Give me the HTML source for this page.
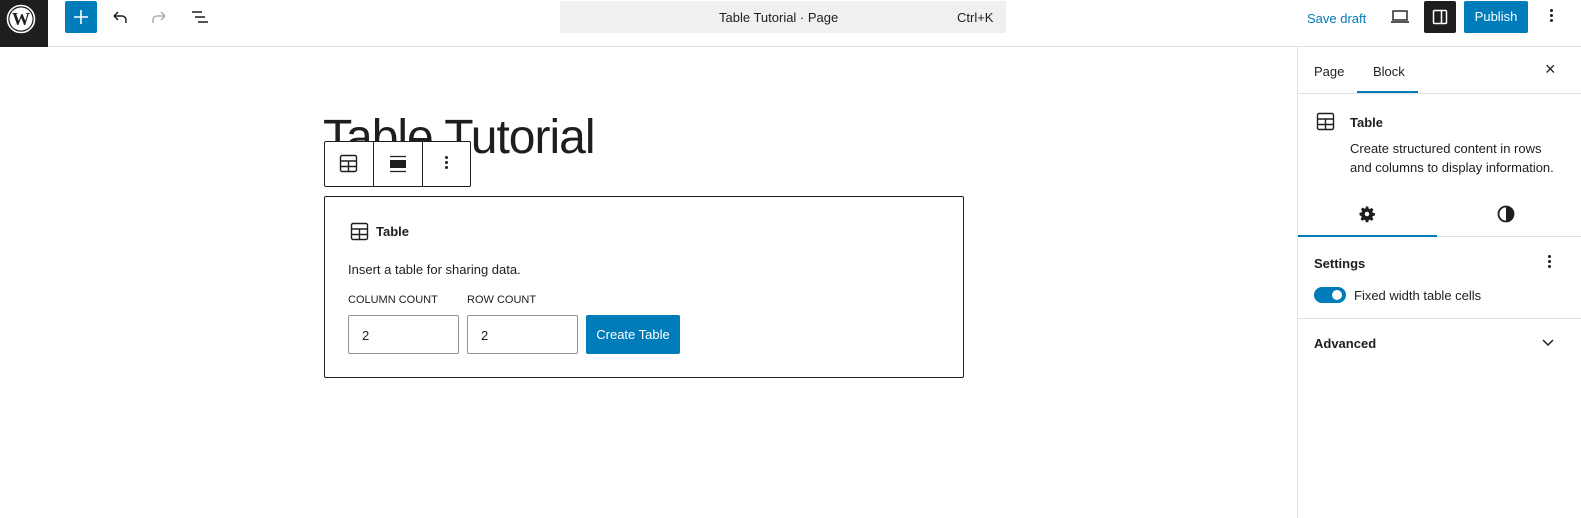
<!DOCTYPE html>
<html><head><style>
*{box-sizing:border-box;margin:0;padding:0}
body{width:1581px;height:518px;overflow:hidden;background:#fff;font-family:"Liberation Sans",sans-serif;color:#1e1e1e;position:relative;font-size:13px}
.a{position:absolute}
</style></head><body>
<div class="a" style="left:0;top:0;width:1581px;height:47px;border-bottom:1px solid #e0e0e0"></div>
<div class="a" style="left:0;top:0;width:48px;height:47px;background:#1e1e1e"></div>
<svg class="a" style="left:6px;top:4px" width="30" height="30" viewBox="0 0 30 30"><circle cx="15" cy="15" r="13.5" fill="none" stroke="#fff" stroke-width="1.6"/><circle cx="15" cy="15" r="11.5" fill="#fff"/><text x="15" y="21" text-anchor="middle" font-family="Liberation Serif" font-weight="bold" font-size="18" fill="#1e1e1e">W</text></svg>
<div class="a" style="left:65px;top:1px;width:32px;height:32px;background:#007cba;border-radius:2px"></div>
<svg class="a" style="left:65px;top:1px" width="32" height="32"><path d="M16 9v14M9 16h14" stroke="#fff" stroke-width="1.6"/></svg>
<svg class="a" style="left:110px;top:7px" width="20" height="20"><path d="M4 9h8a4 4 0 0 1 4 4v3M4 9l4-4M4 9l4 4" fill="none" stroke="#1e1e1e" stroke-width="1.5"/></svg>
<svg class="a" style="left:149px;top:7px" width="20" height="20"><path d="M16 9H8a4 4 0 0 0-4 4v3M16 9l-4-4M16 9l-4 4" fill="none" stroke="#aaa" stroke-width="1.5"/></svg>
<svg class="a" style="left:190px;top:7px" width="20" height="20"><path d="M2 5h10M5 10h10M8 15h10" stroke="#1e1e1e" stroke-width="1.5"/></svg>
<div class="a" style="left:560px;top:1px;width:446px;height:32px;background:#f0f0f0;border-radius:2px"></div>
<div class="a" style="left:719px;top:10px;font-size:13px">Table Tutorial · Page</div>
<div class="a" style="left:957px;top:10px;font-size:13px">Ctrl+K</div>
<div class="a" style="left:1307px;top:11px;color:#007cba;font-size:13px">Save draft</div>
<svg class="a" style="left:1390px;top:7px" width="20" height="20"><rect x="3" y="4" width="14" height="9" fill="none" stroke="#1e1e1e" stroke-width="1.4"/><path d="M1 15h18" stroke="#1e1e1e" stroke-width="1.5"/></svg>
<div class="a" style="left:1424px;top:1px;width:32px;height:32px;background:#1e1e1e;border-radius:2px"></div>
<svg class="a" style="left:1430px;top:7px" width="20" height="20"><rect x="3.5" y="3.5" width="13" height="13" rx="1" fill="none" stroke="#fff" stroke-width="1.5"/><path d="M11.5 3.5v13" stroke="#fff" stroke-width="1.5"/></svg>
<div class="a" style="left:1464px;top:1px;width:64px;height:32px;background:#007cba;border-radius:2px;color:#fff;text-align:center;line-height:32px;font-size:13px">Publish</div>
<div class="a" style="left:1550px;top:9px;width:3px;height:3px;background:#1e1e1e;border-radius:50%;box-shadow:0 5px 0 #1e1e1e,0 10px 0 #1e1e1e"></div>

<div class="a" style="left:1297px;top:47px;width:1px;height:471px;background:#e0e0e0"></div>
<div class="a" style="left:1298px;top:93px;width:283px;height:1px;background:#e0e0e0"></div>
<div class="a" style="left:1314px;top:64px">Page</div>
<div class="a" style="left:1373px;top:64px">Block</div>
<div class="a" style="left:1357px;top:91px;width:61px;height:2px;background:#007cba"></div>
<div class="a" style="left:1545px;top:59px;font-size:18px">×</div>
<svg class="a" style="left:1316px;top:112px" width="20" height="20"><rect x="1.5" y="1.5" width="16" height="16" rx="1.5" fill="none" stroke="#1e1e1e" stroke-width="1.4"/><path d="M1.5 7h16M1.5 12.5h16M9.5 7v10.5" stroke="#1e1e1e" stroke-width="1.4"/></svg>
<div class="a" style="left:1350px;top:115px;font-weight:bold;font-size:13px">Table</div>
<div class="a" style="left:1350px;top:139px;font-size:13px;line-height:19px">Create structured content in rows<br>and columns to display information.</div>
<svg class="a" style="left:1358px;top:205px" width="18" height="18" viewBox="0 0 24 24"><path fill="#1e1e1e" d="M10.3 2h3.4l.5 2.8 1.6.7 2.4-1.6 2.4 2.4-1.6 2.4.7 1.6 2.8.5v3.4l-2.8.5-.7 1.6 1.6 2.4-2.4 2.4-2.4-1.6-1.6.7-.5 2.8h-3.4l-.5-2.8-1.6-.7-2.4 1.6-2.4-2.4 1.6-2.4-.7-1.6L2 13.7v-3.4l2.8-.5.7-1.6-1.6-2.4 2.4-2.4 2.4 1.6 1.6-.7zM12 9a3 3 0 1 0 0 6 3 3 0 0 0 0-6z"/></svg>
<svg class="a" style="left:1497px;top:205px" width="18" height="18"><circle cx="9" cy="9" r="7.5" fill="none" stroke="#1e1e1e" stroke-width="1.8"/><path d="M9 1.5a7.5 7.5 0 0 1 0 15z" fill="#1e1e1e"/></svg>
<div class="a" style="left:1298px;top:236px;width:283px;height:1px;background:#e0e0e0"></div>
<div class="a" style="left:1298px;top:235px;width:139px;height:2px;background:#007cba"></div>
<div class="a" style="left:1314px;top:256px;font-size:13px;font-weight:bold">Settings</div>
<div class="a" style="left:1548px;top:255px;width:3px;height:3px;background:#1e1e1e;border-radius:50%;box-shadow:0 5px 0 #1e1e1e,0 10px 0 #1e1e1e"></div>
<div class="a" style="left:1314px;top:287px;width:32px;height:16px;background:#007cba;border-radius:8px"></div>
<div class="a" style="left:1332px;top:290px;width:10px;height:10px;background:#fff;border-radius:50%"></div>
<div class="a" style="left:1354px;top:288px;font-size:13px">Fixed width table cells</div>
<div class="a" style="left:1298px;top:318px;width:283px;height:1px;background:#e0e0e0"></div>
<div class="a" style="left:1314px;top:336px;font-size:13px;font-weight:bold">Advanced</div>
<svg class="a" style="left:1541px;top:337px" width="14" height="10"><path d="M2 3l5 5 5-5" fill="none" stroke="#1e1e1e" stroke-width="1.5"/></svg>

<div class="a" style="left:323px;top:108px;font-size:48px;letter-spacing:-1px;line-height:60px">Table Tutorial</div>
<div class="a" style="left:324px;top:141px;width:147px;height:46px;background:#fff;border:1px solid #1e1e1e;border-radius:2px"></div>
<div class="a" style="left:373px;top:142px;width:1px;height:44px;background:#1e1e1e"></div>
<div class="a" style="left:422px;top:142px;width:1px;height:44px;background:#1e1e1e"></div>
<svg class="a" style="left:339px;top:154px" width="20" height="20"><rect x="1.5" y="1.5" width="16" height="16" rx="1.5" fill="none" stroke="#1e1e1e" stroke-width="1.4"/><path d="M1.5 7h16M1.5 12.5h16M9.5 7v10.5" stroke="#1e1e1e" stroke-width="1.4"/></svg>
<svg class="a" style="left:388px;top:154px" width="20" height="20"><path d="M2 2.5h16M2 17.5h16" stroke="#1e1e1e" stroke-width="1.3"/><rect x="2" y="6" width="16" height="8" fill="#1e1e1e"/></svg>
<div class="a" style="left:445px;top:156px;width:3px;height:3px;background:#1e1e1e;border-radius:50%;box-shadow:0 5px 0 #1e1e1e,0 10px 0 #1e1e1e"></div>
<div class="a" style="left:324px;top:196px;width:640px;height:182px;border:1px solid #1e1e1e;border-radius:2px"></div>
<svg class="a" style="left:350px;top:222px" width="20" height="20"><rect x="1.5" y="1.5" width="16" height="16" rx="1.5" fill="none" stroke="#1e1e1e" stroke-width="1.4"/><path d="M1.5 7h16M1.5 12.5h16M9.5 7v10.5" stroke="#1e1e1e" stroke-width="1.4"/></svg>
<div class="a" style="left:376px;top:224px;font-weight:bold;font-size:13px">Table</div>
<div class="a" style="left:348px;top:262px;font-size:13px">Insert a table for sharing data.</div>
<div class="a" style="left:348px;top:294px;font-size:11px">COLUMN COUNT</div>
<div class="a" style="left:467px;top:294px;font-size:11px">ROW COUNT</div>
<div class="a" style="left:348px;top:315px;width:111px;height:39px;border:1px solid #949494;border-radius:2px;padding:12px 13px;font-size:13px">2</div>
<div class="a" style="left:467px;top:315px;width:111px;height:39px;border:1px solid #949494;border-radius:2px;padding:12px 13px;font-size:13px">2</div>
<div class="a" style="left:586px;top:315px;width:94px;height:39px;background:#007cba;border-radius:2px;color:#fff;text-align:center;line-height:39px;font-size:13px">Create Table</div>
</body></html>
